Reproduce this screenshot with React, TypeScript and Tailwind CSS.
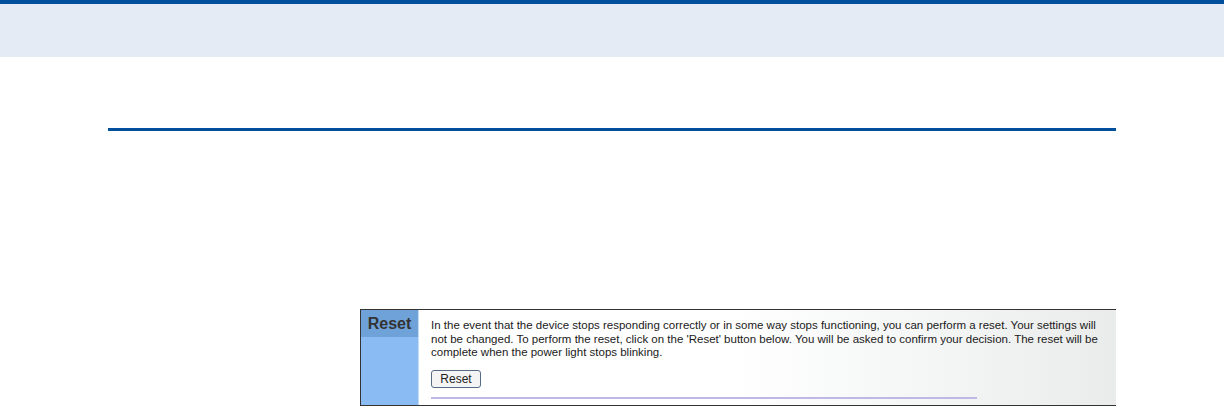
export default function App() {
  return (
    <div className="w-[1224px] h-[408px] bg-white font-['Liberation_Sans',Arial,sans-serif] overflow-hidden">
      <div className="h-[4px] bg-[#004f9c]" />
      <div className="h-[53px] bg-[#e4ebf4]" />
      <div className="pt-[71px] pl-[108px]">
        <div className="w-[1008px] h-[3px] bg-[#004f9c]" />
      </div>

      <div className="mt-[178px] ml-[360px] w-[756px] h-[97px] flex border-t border-l border-b border-[#333333]">
        <div className="w-[58px] flex flex-col bg-[#8abbf2] border-r border-[#c5dcf6]">
          <div className="h-[27px] bg-[#6fa2d8] flex items-center justify-center text-[16px] font-bold text-[#333333]">
            Reset
          </div>
        </div>
        <div className="flex-1 pl-[12px] pt-[9px] bg-gradient-to-r from-white from-45% to-[#eaecec] text-[11.5px] leading-[13.5px] text-[#1a1a1a]">
          <p>
            In the event that the device stops responding correctly or in some way stops functioning, you can perform a reset. Your settings will
            <br />
            not be changed. To perform the reset, click on the 'Reset' button below. You will be asked to confirm your decision. The reset will be
            <br />
            complete when the power light stops blinking.
          </p>
          <button className="mt-[10px] w-[50px] h-[18px] border border-[#556b88] rounded-[3px] bg-[#f4f4f4] text-[12px] leading-none text-[#222222]">
            Reset
          </button>
          <div className="mt-[9px] w-[546px] h-[2px] bg-[#bfb8e6]" />
        </div>
      </div>
    </div>
  );
}
